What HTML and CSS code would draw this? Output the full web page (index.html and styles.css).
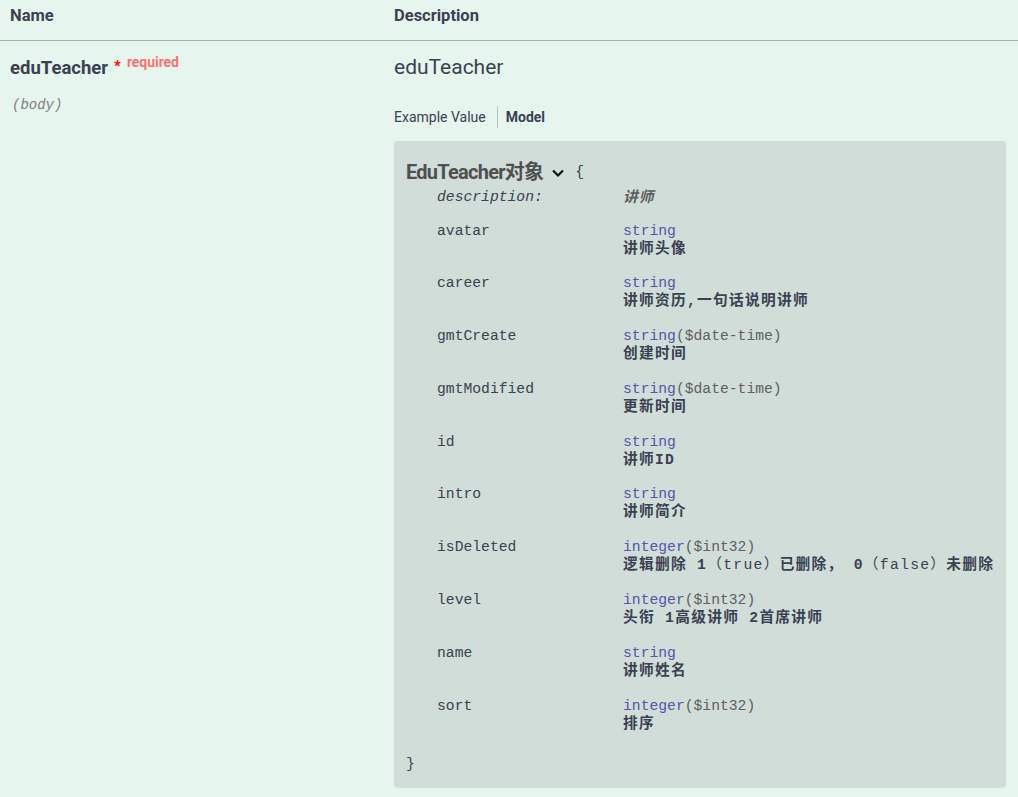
FILE: index.html
```html
<!DOCTYPE html>
<html lang="zh">
<head>
<meta charset="utf-8">
<title>eduTeacher</title>
<link rel="stylesheet" href="styles.css">
</head>
<body>
<div class="params">
  <div class="head">
    <div class="hcell hname">Name</div>
    <div class="hcell">Description</div>
  </div>
  <div class="row">
    <div class="name-cell">
      <div class="pname">eduTeacher<span class="star">*</span><span class="req">required</span></div>
      <div class="pin">(body)</div>
    </div>
    <div class="desc-cell">
      <div class="ptitle">eduTeacher</div>
      <div class="tabs">
        <span class="tab">Example Value</span>
        <span class="tab active">Model</span>
      </div>
      <div class="model-box">
        <div class="model-title">EduTeacher对象<svg class="chev" width="14" height="10" viewBox="0 0 14 10"><path d="M2 2.5 L7 7.5 L12 2.5" fill="none" stroke="#111" stroke-width="2.2"/></svg><span class="brace">{</span></div>
        <div class="prop-desc">
          <span class="pn">description:</span>
          <span class="pv">讲师</span>
        </div>
        <div class="prop">
          <span class="pn">avatar</span>
          <div class="pv"><div class="ty">string</div><div class="dd">讲师头像</div></div>
        </div>
        <div class="prop">
          <span class="pn">career</span>
          <div class="pv"><div class="ty">string</div><div class="dd">讲师资历,一句话说明讲师</div></div>
        </div>
        <div class="prop">
          <span class="pn">gmtCreate</span>
          <div class="pv"><div class="ty">string<span class="fmt">($date-time)</span></div><div class="dd">创建时间</div></div>
        </div>
        <div class="prop">
          <span class="pn">gmtModified</span>
          <div class="pv"><div class="ty">string<span class="fmt">($date-time)</span></div><div class="dd">更新时间</div></div>
        </div>
        <div class="prop">
          <span class="pn">id</span>
          <div class="pv"><div class="ty">string</div><div class="dd">讲师ID</div></div>
        </div>
        <div class="prop">
          <span class="pn">intro</span>
          <div class="pv"><div class="ty">string</div><div class="dd">讲师简介</div></div>
        </div>
        <div class="prop">
          <span class="pn">isDeleted</span>
          <div class="pv"><div class="ty">integer<span class="fmt">($int32)</span></div><div class="dd">逻辑删除 1<span class="lt">（true）</span>已删除， 0<span class="lt">（false）</span>未删除</div></div>
        </div>
        <div class="prop">
          <span class="pn">level</span>
          <div class="pv"><div class="ty">integer<span class="fmt">($int32)</span></div><div class="dd">头衔 1高级讲师 2首席讲师</div></div>
        </div>
        <div class="prop">
          <span class="pn">name</span>
          <div class="pv"><div class="ty">string</div><div class="dd">讲师姓名</div></div>
        </div>
        <div class="prop">
          <span class="pn">sort</span>
          <div class="pv"><div class="ty">integer<span class="fmt">($int32)</span></div><div class="dd">排序</div></div>
        </div>
        <div class="close">}</div>
      </div>
    </div>
  </div>
</div>
</body>
</html>
```
FILE: styles.css
```css
html, body {
  margin: 0;
  padding: 0;
  background: #e7f5ef;
}
body {
  width: 1018px;
  height: 797px;
  overflow: hidden;
  font-family: Roboto, "Noto Sans CJK SC", sans-serif;
  color: #3b4151;
}
.head {
  display: grid;
  grid-template-columns: 394px 1fr;
  height: 40px;
  border-bottom: 1px solid #a6b5ae;
}
.hcell {
  font-size: 16.5px;
  font-weight: 700;
  line-height: 18px;
  padding-top: 7px;
}
.hname { padding-left: 10px; }
.row {
  display: grid;
  grid-template-columns: 394px 1fr;
}
.name-cell {
  padding-left: 10px;
  padding-top: 13px;
}
.pname {
  font-size: 18.5px;
  font-weight: 700;
  line-height: 28px;
  height: 28px;
  color: #3b4151;
}
.star {
  color: #f00;
  font-size: 15px;
  font-weight: 700;
  line-height: 0;
  margin-left: 6px;
  vertical-align: 3px;
}
.req {
  color: #ff6b6b;
  font-size: 14px;
  font-weight: 600;
  line-height: 0;
  margin-left: 6px;
  vertical-align: 7px;
}
.pin {
  margin-top: 13px;
  margin-left: 2px;
  font-family: "Liberation Mono", monospace;
  font-style: italic;
  font-size: 14px;
  line-height: 20px;
  color: #808080;
}
.desc-cell {
  padding-top: 11px;
  padding-right: 13px;
}
.ptitle {
  font-size: 21px;
  line-height: 30px;
  font-weight: 400;
  color: #3b4151;
}
.tabs {
  margin-top: 24px;
  display: flex;
  align-items: center;
  height: 22px;
  font-size: 14px;
}
.tab {
  line-height: 22px;
  color: #3b4151;
  padding-right: 11px;
}
.tab.active {
  font-weight: 700;
  border-left: 1px solid #b9c6c0;
  padding-left: 8px;
}
.model-box {
  margin-top: 13px;
  background: #d0ddd8;
  border-radius: 4px;
  padding: 17px 12px 15px 12px;
  font-family: "Liberation Mono", "Noto Sans CJK SC", monospace;
  font-size: 14.7px;
}
.model-title {
  font-family: Roboto, "Noto Sans CJK SC", sans-serif;
  font-size: 20px;
  font-weight: 700;
  line-height: 28px;
  color: #505050;
  letter-spacing: -0.75px;
  display: flex;
  align-items: center;
}
.chev {
  margin-left: 8px;
  margin-top: 2px;
}
.brace {
  font-family: "Liberation Mono", monospace;
  font-size: 14.7px;
  font-weight: 400;
  letter-spacing: 0;
  color: #3b4151;
  margin-left: 10px;
}
.prop-desc, .prop {
  display: grid;
  grid-template-columns: 186px 1fr;
  padding-left: 31px;
}
.prop-desc {
  height: 20px;
  padding-bottom: 7.5px;
  color: #606060;
  font-style: italic;
}
.prop-desc .pn, .prop-desc .pv {
  line-height: 20px;
}
.prop-desc .pn {
  padding-top: 1px;
}
.prop-desc .pv {
  font-family: "Noto Sans CJK SC", sans-serif;
  font-weight: 700;
  letter-spacing: 1px;
}
.prop {
  padding-top: 9px;
  padding-bottom: 8.8px;
}
.pn {
  line-height: 17px;
  color: #3b4151;
}
.ty {
  line-height: 17px;
  color: #55a;
}
.fmt {
  color: #606060;
}
.dd {
  line-height: 18px;
  font-family: "Liberation Mono", "Noto Sans CJK SC", monospace;
  font-weight: 700;
  letter-spacing: 1.3px;
  color: #3b4151;
  white-space: nowrap;
}
.lt {
  font-weight: 400;
}
.close {
  margin-top: 14px;
  line-height: 18px;
  color: #3b4151;
}
```
